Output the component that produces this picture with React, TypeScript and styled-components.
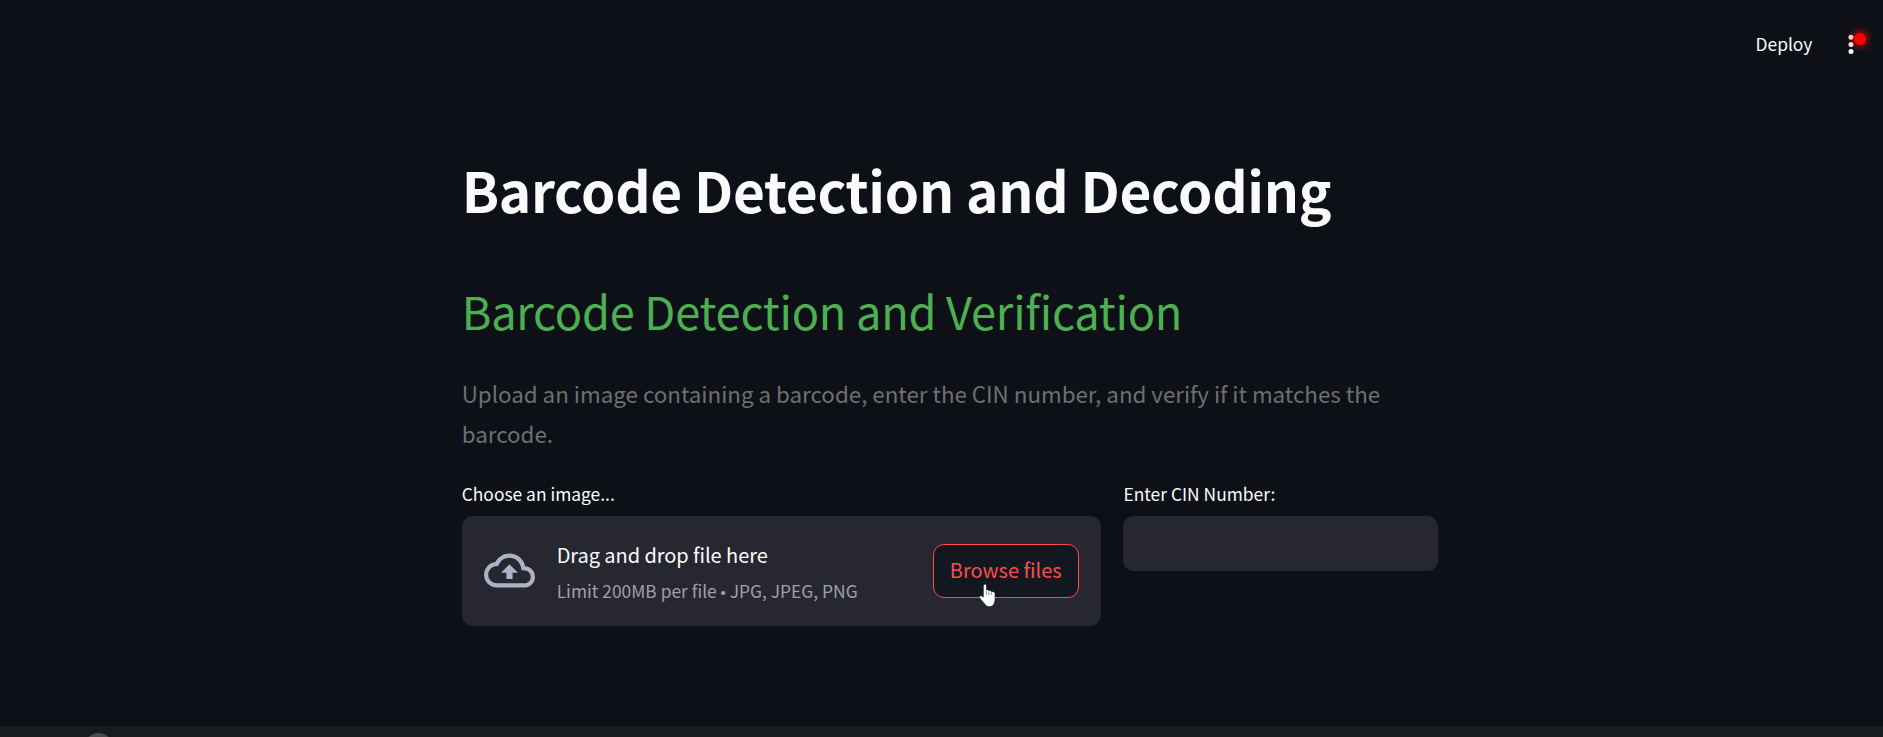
import React from 'react';
import styled, { createGlobalStyle } from 'styled-components';

const GlobalStyle = createGlobalStyle`
  *, *::before, *::after { box-sizing: border-box; }
  body {
    margin: 0;
    background: #0d1117;
    color: #fafafa;
    font-family: "Noto Sans CJK SC", "Noto Sans", sans-serif;
  }
`;

const Page = styled.div`
  display: flex;
  flex-direction: column;
  height: 737px;
  overflow: hidden;
`;

const Toolbar = styled.header`
  display: flex;
  justify-content: flex-end;
  align-items: center;
  gap: 36px;
  height: 88px;
  padding-right: 28.6px;
`;

const DeployButton = styled.button`
  border: 0;
  padding: 0;
  background: none;
  color: inherit;
  font: inherit;
  font-size: 17.4px;
  line-height: 28px;
`;

const MenuButton = styled.button`
  position: relative;
  display: flex;
  border: 0;
  padding: 0;
  background: none;
  color: #fafafa;
`;

const RecordDot = styled.span`
  position: absolute;
  left: 5.4px;
  top: -0.8px;
  width: 12px;
  height: 12px;
  border-radius: 50%;
  background: #ff0000;
  box-shadow: 0 0 6px 2.5px rgba(255, 0, 0, 0.6);
`;

const Content = styled.main`
  flex: 1;
  width: 976px;
  margin-left: 461.7px;
  padding-top: 68px;
`;

const Title = styled.h1`
  margin: 0;
  font-size: 55px;
  font-weight: 700;
  line-height: 66px;
  letter-spacing: -0.31px;
  white-space: nowrap;
`;

const Subtitle = styled.h2`
  margin: 62px 0 0;
  color: #4caf50;
  font-size: 45.2px;
  font-weight: 400;
  line-height: 54px;
  letter-spacing: -0.25px;
  white-space: nowrap;
`;

const Description = styled.p`
  margin: 35px 0 0;
  color: #6f6f6f;
  font-size: 22.4px;
  line-height: 40.3px;
  letter-spacing: -0.025px;
`;

const Columns = styled.div`
  display: grid;
  grid-template-columns: 639.6px 314.2px;
  column-gap: 22.2px;
  align-items: start;
  margin-top: 26.4px;
`;

const Field = styled.div`
  display: flex;
  flex-direction: column;
  gap: 8px;
`;

const Label = styled.label`
  font-size: 17.4px;
  line-height: 28px;
`;

const Dropzone = styled.section`
  display: flex;
  align-items: center;
  height: 110px;
  padding: 0 22.4px;
  border-radius: 11px;
  background: #262730;
`;

const Instructions = styled.div`
  display: flex;
  flex-direction: column;
  gap: 6px;
  margin-left: 21.6px;
  padding-top: 3px;
`;

const Primary = styled.span`
  font-size: 20px;
  line-height: 32px;
  letter-spacing: -0.06px;
`;

const Secondary = styled.span`
  color: #a0a0a4;
  font-size: 17.4px;
  line-height: 28px;
`;

const Bullet = styled.span`
  font-family: "Liberation Sans", sans-serif;
  font-size: 15px;
  line-height: 1;
`;

const BrowseButton = styled.button`
  position: relative;
  width: 146.4px;
  height: 54px;
  margin-left: auto;
  padding: 0 0 2px;
  border: 1.4px solid #ff4b4b;
  border-radius: 11px;
  background: #131720;
  color: #ff4b4b;
  font: inherit;
  font-size: 20px;
  line-height: 32px;
`;

const Pointer = styled.svg`
  position: absolute;
  left: 45.6px;
  top: 39px;
`;

const TextInput = styled.input`
  width: 100%;
  height: 55px;
  padding: 0 16px;
  border: 0;
  border-radius: 11px;
  background: #262730;
  color: inherit;
  font: inherit;
`;

const PlayerBar = styled.footer`
  height: 11px;
  padding: 7px 0 0 84px;
  overflow: hidden;
  background: #1a1b1b;
`;

const PlayerKnob = styled.div`
  width: 29px;
  height: 29px;
  border-radius: 50%;
  background: #4a4a4a;
`;

export default function App() {
  return (
    <>
      <GlobalStyle />
      <Page>
        <Toolbar>
          <DeployButton>Deploy</DeployButton>
          <MenuButton aria-label="Main menu">
            <svg width="6" height="20" viewBox="0 0 6 20" fill="currentColor">
              <circle cx="3" cy="3.3" r="2.5" />
              <circle cx="3" cy="10.4" r="2.5" />
              <circle cx="3" cy="17.4" r="2.5" />
            </svg>
            <RecordDot />
          </MenuButton>
        </Toolbar>
        <Content>
          <Title>Barcode Detection and Decoding</Title>
          <Subtitle>Barcode Detection and Verification</Subtitle>
          <Description>
            Upload an image containing a barcode, enter the CIN number, and verify if it matches the barcode.
          </Description>
          <Columns>
            <Field>
              <Label>Choose an image...</Label>
              <Dropzone>
                <svg width="51" height="51" viewBox="0 0 24 24" fill="#b0b1c4">
                  <path d="M19.35 10.04A7.49 7.49 0 0 0 12 4C9.11 4 6.6 5.64 5.35 8.04A5.994 5.994 0 0 0 0 14c0 3.31 2.69 6 6 6h13c2.76 0 5-2.24 5-5 0-2.64-2.05-4.78-4.65-4.96zM19 18H6c-2.21 0-4-1.79-4-4 0-2.05 1.53-3.76 3.56-3.97l1.07-.11.5-.95A5.469 5.469 0 0 1 12 6c2.62 0 4.88 1.86 5.39 4.43l.3 1.5 1.53.11A2.98 2.98 0 0 1 22 15c0 1.65-1.35 3-3 3zM8 13h2.55v3h2.9v-3H16l-4-4z" />
                </svg>
                <Instructions>
                  <Primary>Drag and drop file here</Primary>
                  <Secondary>
                    Limit 200MB per file <Bullet>•</Bullet> JPG, JPEG, PNG
                  </Secondary>
                </Instructions>
                <BrowseButton>
                  Browse files
                  <Pointer width="17" height="23" viewBox="0 0 17 23">
                    <path
                      d="M4.7 1.3C4.7.3 7.2.3 7.2 1.5V6.6C7.8 5.7 9.5 6 9.6 7.2 10.3 6.5 12 6.8 12.1 8 12.9 7.4 14.6 7.8 15.7 9V15.5C15.7 18 14.6 19.5 13.8 21.2 12 22.7 8.2 22.7 6.7 20.8L1.2 14.3C.1 12.6 1.5 11.3 2.9 12.2L4.7 13.7Z"
                      fill="#fff"
                    />
                    <path d="M7.4 6.8V11M9.9 7.5V11M12.4 8.3V11" stroke="#62636b" strokeWidth=".7" fill="none" />
                  </Pointer>
                </BrowseButton>
              </Dropzone>
            </Field>
            <Field>
              <Label htmlFor="cin">Enter CIN Number:</Label>
              <TextInput id="cin" type="text" />
            </Field>
          </Columns>
        </Content>
        <PlayerBar>
          <PlayerKnob />
        </PlayerBar>
      </Page>
    </>
  );
}
